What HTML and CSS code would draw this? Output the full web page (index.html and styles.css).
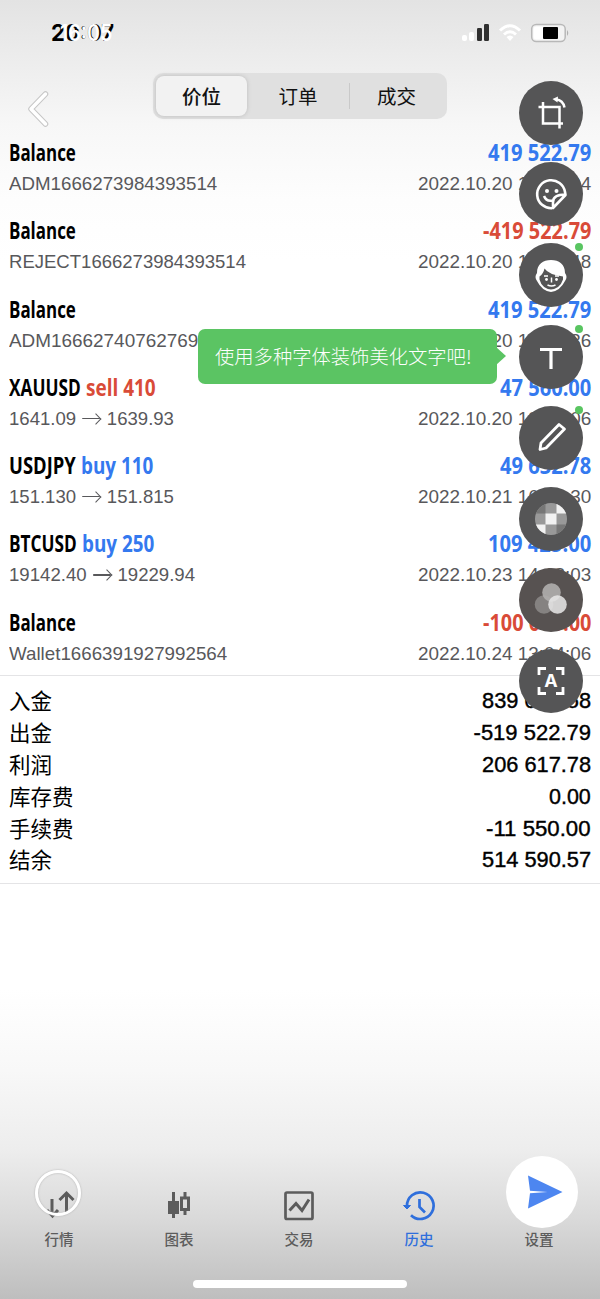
FILE: index.html
```
<!DOCTYPE html>
<html lang="zh-CN">
<head>
<meta charset="utf-8">
<title>历史</title>
<link rel="stylesheet" href="styles.css">
</head>
<body>
<div class="screen">
  <header class="status">
    <div class="clock"><span class="fit" data-w="63">20:07</span><span class="clock-ghost"><span class="fit" data-w="52">16:05</span></span></div>
    <svg class="signals" width="110" height="22" viewBox="0 0 110 22">
      <g fill="#fff"><rect x="2" y="13" width="5" height="6" rx="2"/><rect x="9" y="10" width="5" height="9" rx="2"/></g>
      <g fill="#303030"><rect x="17" y="6" width="5" height="13" rx="1.2"/><rect x="24" y="2" width="5" height="17" rx="1.2"/></g>
      <g fill="none" stroke="#fff" stroke-width="3"><path d="M40 8.5Q50-1 60 8.5M44 12.500Q50 7 56 12.500"/></g><path d="M46.500 15Q50 12 53.500 15L50 19Z" fill="#fff"/>
      <rect x="71.700" y="2.500" width="33.500" height="17" rx="4.500" fill="#f3f3f3" stroke="#b8b8b8" stroke-width="1.500"/>
      <path d="M107 8q2.500 3 0 6z" fill="#b0b0b0"/><rect x="73.500" y="4.500" width="12" height="13" rx="3" fill="#fff"/><rect x="83" y="5" width="15" height="12" rx="1" fill="#000"/>
    </svg>
  </header>
  <nav class="top">
    <svg class="back" width="24" height="38" viewBox="0 0 24 38" fill="none" stroke-linecap="round" stroke-linejoin="round"><path d="M20.500 4L6 19L20.500 34" stroke="#c6c6c6" stroke-width="5.500"/><path d="M20.500 4L6 19L20.500 34" stroke="#fff" stroke-width="3.500"/></svg>
    <div class="segments"><span class="seg active">价位</span><span class="seg">订单</span><span class="seg split">成交</span></div>
  </nav>
  <main>
    <section class="deals">
      <article class="deal"><div class="line title"><span class="fit" data-w="67">Balance</span><span class="fit end buy" data-w="103">419 522.79</span></div><div class="line sub"><span class="fit" data-w="208">ADM1666273984393514</span><span class="fit end" data-w="173">2022.10.20 16:53:04</span></div></article>
      <article class="deal"><div class="line title"><span class="fit" data-w="67">Balance</span><span class="fit end sell" data-w="108">-419 522.79</span></div><div class="line sub"><span class="fit" data-w="237">REJECT1666273984393514</span><span class="fit end" data-w="173">2022.10.20 16:53:48</span></div></article>
      <article class="deal"><div class="line title"><span class="fit" data-w="67">Balance</span><span class="fit end buy" data-w="103">419 522.79</span></div><div class="line sub"><span class="fit" data-w="210">ADM1666274076276936</span><span class="fit end" data-w="173">2022.10.20 16:54:36</span></div></article>
      <article class="deal"><div class="line title"><span class="pair"><span class="fit" data-w="72">XAUUSD</span><span class="fit sell" data-w="70">sell 410</span></span><span class="fit end buy" data-w="91">47 560.00</span></div><div class="line sub"><span class="fit" data-w="165">1641.09 <i class="arrow"></i> 1639.93</span><span class="fit end" data-w="173">2022.10.20 18:30:06</span></div></article>
      <article class="deal"><div class="line title"><span class="pair"><span class="fit" data-w="67">USDJPY</span><span class="fit buy" data-w="72">buy 110</span></span><span class="fit end buy" data-w="91">49 632.78</span></div><div class="line sub"><span class="fit" data-w="165">151.130 <i class="arrow"></i> 151.815</span><span class="fit end" data-w="173">2022.10.21 16:20:30</span></div></article>
      <article class="deal"><div class="line title"><span class="pair"><span class="fit" data-w="68">BTCUSD</span><span class="fit buy" data-w="72">buy 250</span></span><span class="fit end buy" data-w="103">109 425.00</span></div><div class="line sub"><span class="fit" data-w="186">19142.40 <i class="arrow"></i> 19229.94</span><span class="fit end" data-w="173">2022.10.23 14:18:03</span></div></article>
      <article class="deal"><div class="line title"><span class="fit" data-w="67">Balance</span><span class="fit end sell" data-w="108">-100 000.00</span></div><div class="line sub"><span class="fit" data-w="218">Wallet1666391927992564</span><span class="fit end" data-w="173">2022.10.24 13:04:06</span></div></article>
    </section>
    <section class="summary">
      <div class="line"><span>入金</span><span class="fit end num" data-w="109">839 045.58</span></div>
      <div class="line"><span>出金</span><span class="fit end num" data-w="117">-519 522.79</span></div>
      <div class="line"><span>利润</span><span class="fit end num" data-w="109">206 617.78</span></div>
      <div class="line"><span>库存费</span><span class="fit end num" data-w="42">0.00</span></div>
      <div class="line"><span>手续费</span><span class="fit end num" data-w="105">-11 550.00</span></div>
      <div class="line"><span>结余</span><span class="fit end num" data-w="109">514 590.57</span></div>
    </section>
  </main>
  <footer class="tabs">
    <div class="tab"><svg width="36" height="36" viewBox="0 0 36 36" fill="none" stroke="#5c5c5c" stroke-width="3"><path d="M11 11V27M6 22l5.500 6L17 22M25.500 24V5M18.500 12l7-7 7 7"/></svg><span>行情</span></div>
    <div class="tab"><svg width="36" height="36" viewBox="0 0 36 36"><g fill="#5c5c5c"><path d="M11 4h3v9h4v13h-4v4h-3v-4H7V13h4z"/><path fill-rule="evenodd" d="M22.500 4h3v4.500H29V23h-3.500v4h-3v-4H19V8.500h3.500zM22 11.500V20h4v-8.500z"/></g></svg><span>图表</span></div>
    <div class="tab"><svg width="36" height="36" viewBox="0 0 36 36" fill="none" stroke="#5c5c5c" stroke-width="2.700"><rect x="4.500" y="4.500" width="27" height="26.500" rx="1.500"/><path d="M8.500 22.500l6.500-7 6 7 7-11" stroke-width="3"/></svg><span>交易</span></div>
    <div class="tab current"><svg width="36" height="36" viewBox="0 0 36 36" fill="none" stroke="#2f6fdc" stroke-width="2.700"><path d="M6 18A13.300 13.300 0 1 1 10 27.200"/><path d="M18.500 11v8l5.500 5.500"/><path d="M2.500 17.500h7L6 21z" fill="#2f6fdc" stroke-width="1"/></svg><span>历史</span></div>
    <div class="tab"><svg width="36" height="36"></svg><span>设置</span></div>
  </footer>
  <div class="home"></div>

  <aside class="tools">
    <div class="tool"><svg viewBox="0 0 64 64" fill="none" stroke="#fff" stroke-width="2.500"><path d="M24 21v21.500h20M19.500 26h21v21.500M37 18.500Q44 19 45.500 26.500"/><path d="M39 15.500l-5.500 2.500 5 3.500z" fill="#fff" stroke="none"/></svg></div>
    <div class="tool"><svg viewBox="0 0 64 64" fill="none" stroke="#fff" stroke-width="2.600"><path d="M46 30A14 14 0 1 0 33 46.200M46 30L46.500 33L34 46V40Q34 32.500 46.500 32.500M25 34q2.500 6 8.500 4.500" stroke-linejoin="round"/><g fill="#fff" stroke="none"><circle cx="28" cy="29" r="2"/><circle cx="37.500" cy="29" r="2"/></g></svg></div>
    <div class="tool dot"><svg viewBox="0 0 64 64"><path d="M18 30C18 21 24 17 32 17s14 4 14 13q3 4 0 8Q41 48 32 49 23 48 18 38q-3-4 0-8z" fill="#fff"/><path d="M20.500 33.500q4-3 5-8 4 6 18.500 8v3Q41 45.500 32 46.500q-9-1-11.500-10z" fill="#555"/><path d="M25 33h4m7 0h4M32.500 34.500v5M28.500 42q4 2 8 0" stroke="#fff" stroke-width="1.500" fill="none"/><circle cx="27.500" cy="36.500" r="1.400" fill="#fff"/><circle cx="37.500" cy="36.500" r="1.400" fill="#fff"/></svg></div>
    <div class="tool dot"><svg viewBox="0 0 64 64"><path d="M21 24.500h22M32 25v19" stroke="#fff" stroke-width="3.200"/></svg></div>
    <div class="tool dot"><svg viewBox="0 0 64 64" fill="none" stroke="#fff" stroke-width="2.800" stroke-linejoin="round"><path d="M40 18.500l5.500 4.500L27 42l-6 1.500 1-6.500z"/></svg></div>
    <div class="tool"><svg viewBox="0 0 64 64"><clipPath id="disc"><circle cx="32" cy="32" r="16"/></clipPath><g clip-path="url(#disc)"><path fill="#999" d="M16 16h32v32H16z"/><path fill="#777" d="M16 16h10.500v10.500H16zM37.500 37.500H48V48H37.500z"/><path fill="#f2f2f2" d="M37.500 16H48v10.500H37.500zM26.500 26.500h11v11h-11zM16 37.500h10.500V48H16z"/></g></svg></div>
    <div class="tool warm"><svg viewBox="0 0 64 64"><circle cx="25" cy="36.500" r="9.300" fill="#858281"/><circle cx="32.500" cy="24.500" r="9.300" fill="#b0aead" fill-opacity=".9"/><circle cx="38.500" cy="36.500" r="9.300" fill="#e8e8e8" fill-opacity=".86"/></svg></div>
    <div class="tool"><svg viewBox="0 0 64 64" fill="none" stroke="#fff" stroke-width="2.800"><path d="M20 26v-6.500h7M37 19.500h7V26M44 38v6.500h-7M27 44.500h-7V38"/></svg><span class="letter">A</span></div>
  </aside>
  <div class="tip"><span class="fit" data-w="257">使用多种字体装饰美化文字吧!</span></div>
  <div class="ring"></div>
  <button class="send" aria-label="发送"><svg width="36" height="34" viewBox="0 0 36 34"><path d="M1 .5L35.500 17 1 33.500 3 18.200 20.500 17 3 15.700z" fill="#4d86f0"/></svg></button>
</div>
<script src="fit.js"></script>
</body>
</html>
```
FILE: styles.css
```
* { box-sizing: border-box; }
body { margin: 0; font-family: "Liberation Sans", "Noto Sans CJK SC", sans-serif; }
.screen { position: relative; width: 600px; height: 1299px; overflow: hidden; display: flex; flex-direction: column;
  background: linear-gradient(180deg, #e3e3e3 0, #ebebeb 50px, #f7f7f7 125px, #fdfdfd 200px, #fff 260px, #fff 990px, #f8f8f8 1070px, #ededed 1150px, #d9d9d9 1220px, #bebebe 1299px); }
.fit { display: inline-block; white-space: nowrap; transform-origin: 0 50%; }
.fit.end { transform-origin: 100% 50%; }
.status { height: 66px; padding: 22px 30px 0 51px; display: flex; justify-content: space-between; }
.clock { position: relative; height: 22px; font: bold 23px/22px Inter, sans-serif; color: #000; }
.clock-ghost { position: absolute; left: 9px; top: 0; color: #fff; font-weight: 600; }
.top { height: 70px; display: flex; align-items: flex-start; padding: 7px 0 0 25px; }
.back { margin-top: 17px; }
.segments { margin-left: 104px; width: 294px; height: 46px; padding: 3px; border-radius: 10px; background: #e0e0e0; display: grid; grid-template-columns: 91px 102px 1fr; font: 19.500px/39px "Noto Sans CJK SC", sans-serif; color: #111; text-align: center; }
.seg.active { background: #f2f2f2; border-radius: 8px; font-weight: 500; box-shadow: 0 0 4px #bbb; }
.seg.split { background: linear-gradient(#c9c9c9, #c9c9c9) 0 50% / 1px 26px no-repeat; }
.deals { height: 540px; border-bottom: 1px solid #e4e4e6; padding: 0 9px; }
.deal { height: 78.300px; }
.line { display: flex; justify-content: space-between; }
.title { height: 32px; font: 700 22.500px/33px "Open Sans", sans-serif; color: #000; }
.pair { display: flex; gap: 5px; }
.buy { color: #3479ef; }
.sell { color: #d94b38; }
.sub { height: 30px; font-size: 19px; line-height: 31px; color: #58585b; }
.arrow { display: inline-block; width: 19px; height: 9px; position: relative; top: -1px; margin: 0 1px; }
.arrow::before { content: ""; position: absolute; left: 0; right: 1px; top: 3px; height: 1.300px; background: #58585b; }
.arrow::after { content: ""; position: absolute; right: 1px; top: 0; width: 7px; height: 7px; border: solid #58585b; border-width: 1.300px 1.300px 0 0; transform: rotate(45deg); }
.summary { height: 208px; border-bottom: 1px solid #e4e4e6; padding: 8px 9px 0; font: 21.500px/31px "Noto Sans CJK SC", sans-serif; color: #000; }
.summary .line { height: 31.900px; }
.num { font: 22px/33px "Liberation Sans", sans-serif; -webkit-text-stroke: .4px #000; }
.tabs { margin-top: 304px; display: grid; grid-template-columns: repeat(5, 120px); margin-left: -1px; }
.tab { display: flex; flex-direction: column; align-items: center; font: 500 14.500px/23px "Noto Sans CJK SC", sans-serif; color: #5c5c5c; height: 63px; }
.tab span { margin-top: 3px; }
.tab.current { color: #2f6fdc; }
.home { width: 214px; height: 8px; border-radius: 4px; background: #fff; margin: 29px 0 0 193px; }
.tools { position: absolute; left: 519px; top: 81px; display: flex; flex-direction: column; gap: 17.200px; }
.tool { position: relative; width: 64px; height: 64px; border-radius: 50%; background: #555556; }
.tool.warm { background: #575251; }
.tool svg { display: block; width: 64px; height: 64px; }
.tool.dot::after { content: ""; position: absolute; left: 56px; top: 0; width: 8px; height: 8px; border-radius: 50%; background: #59c561; }
.letter { position: absolute; inset: 0; font: bold 18px/63px Inter, sans-serif; text-align: center; color: #fff; }
.tip { position: absolute; left: 198px; top: 329px; width: 299px; height: 55px; border-radius: 7px; background: #5bc463; color: #fff; font: 300 19px/54px "Noto Sans CJK SC", sans-serif; padding-left: 17px; }
.tip::after { content: ""; position: absolute; left: 298px; top: 18px; border: solid transparent; border-width: 9px 0 9px 10px; border-left-color: #5bc463; }
.ring { position: absolute; left: 35px; top: 1170px; width: 46px; height: 46px; border: 3.500px solid #fff; border-radius: 50%; box-shadow: 0 0 2px #aaa, inset 0 0 2px #aaa; }
.send { position: absolute; left: 506px; top: 1156px; width: 72px; height: 72px; padding: 0 0 0 5px; border: 0; border-radius: 50%; background: #fff; display: grid; place-items: center; }
```
FILE: fit.js
```
document.querySelectorAll('.fit').forEach(el => {
  const natural = el.offsetWidth;
  el.style.transform = `scaleX(${el.dataset.w / natural})`;
  if (el.parentElement.classList.contains('pair')) {
    el.style.marginRight = `${el.dataset.w - natural}px`;
  }
});
```
